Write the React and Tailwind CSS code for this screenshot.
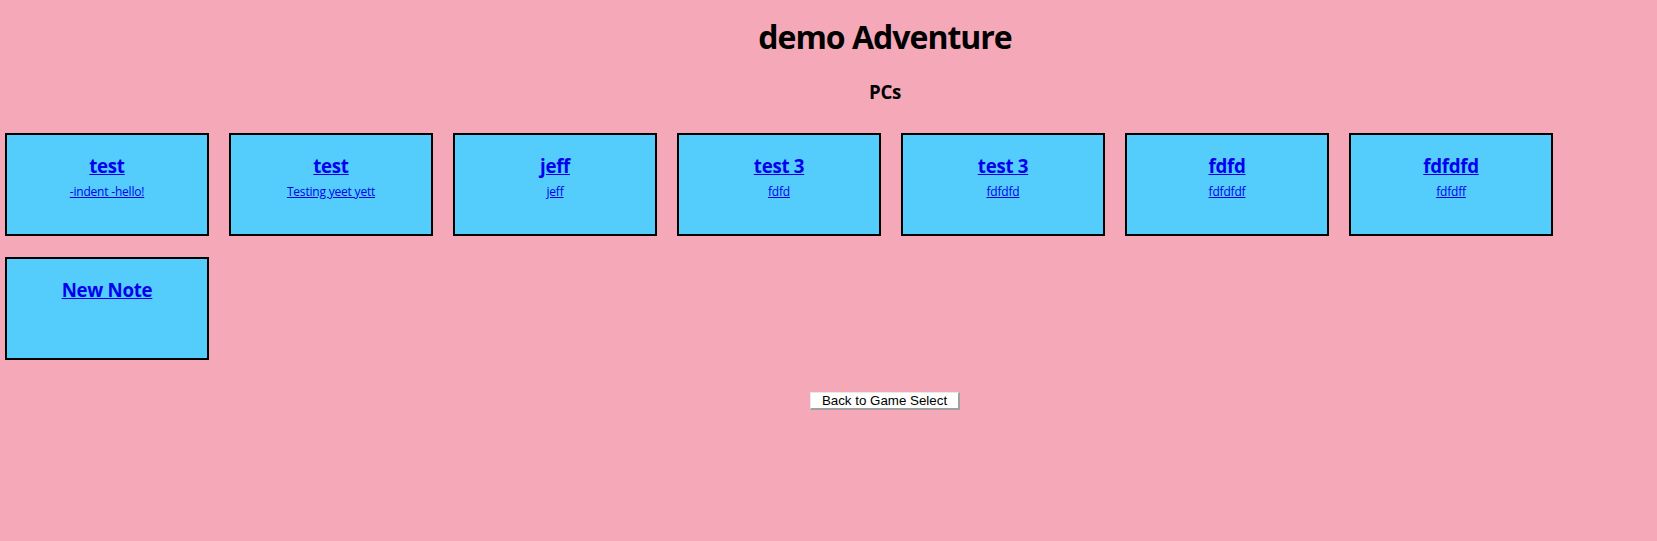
import React from "react";

const cards = [
  { title: "test", sub: "-indent -hello!" },
  { title: "test", sub: "Testing yeet yett" },
  { title: "jeff", sub: "jeff" },
  { title: "test 3", sub: "fdfd" },
  { title: "test 3", sub: "fdfdfd" },
  { title: "fdfd", sub: "fdfdfdf" },
  { title: "fdfdfd", sub: "fdfdff" },
  { title: "New Note", sub: null },
];

export default function App() {
  return (
    <div
      className="min-h-[541px] w-full bg-[#F5A9B8] text-black"
      style={{ fontFamily: '"Open Sans", "Noto Sans", sans-serif' }}
    >
      <div className="pl-[113px] text-center">
        <h1 className="pt-[17px] text-[32px] font-bold leading-[40px] tracking-[-1px]">demo Adventure</h1>
        <h3 className="mt-[23px] text-[18.72px] font-bold leading-[24px] tracking-[-0.3px]">PCs</h3>
      </div>
      <div className="mt-[29px] flex flex-wrap gap-x-[20px] gap-y-[21px] pl-[5px] pr-[100px]">
        {cards.map((c, i) => (
          <div
            key={i}
            className="h-[103px] w-[204px] border-2 border-black bg-[#55CDFC] pt-[19px] text-center"
          >
            <a href="#" className="block text-[18.72px] font-bold leading-[24px] tracking-[-0.3px] text-[#0000EE] underline">
              <span>{c.title}</span>
            </a>
            {c.sub && (
              <div className="mt-[6px] text-[12px] leading-[16px] tracking-[-0.2px]">
                <a href="#" className="text-[#0000EE] underline">{c.sub}</a>
              </div>
            )}
          </div>
        ))}
      </div>
      <div className="mt-[32px] flex justify-center pl-[113px]">
        <button
          className="h-[18px] w-[150px] border-t border-l border-r-2 border-b-2 border-t-[#e8e8e8] border-l-[#e8e8e8] border-r-[#a0a0a0] border-b-[#a0a0a0] bg-white text-[13.33px] leading-[14px] text-black"
          style={{ fontFamily: '"Liberation Sans", Arial, sans-serif' }}
        >
          Back to Game Select
        </button>
      </div>
    </div>
  );
}
